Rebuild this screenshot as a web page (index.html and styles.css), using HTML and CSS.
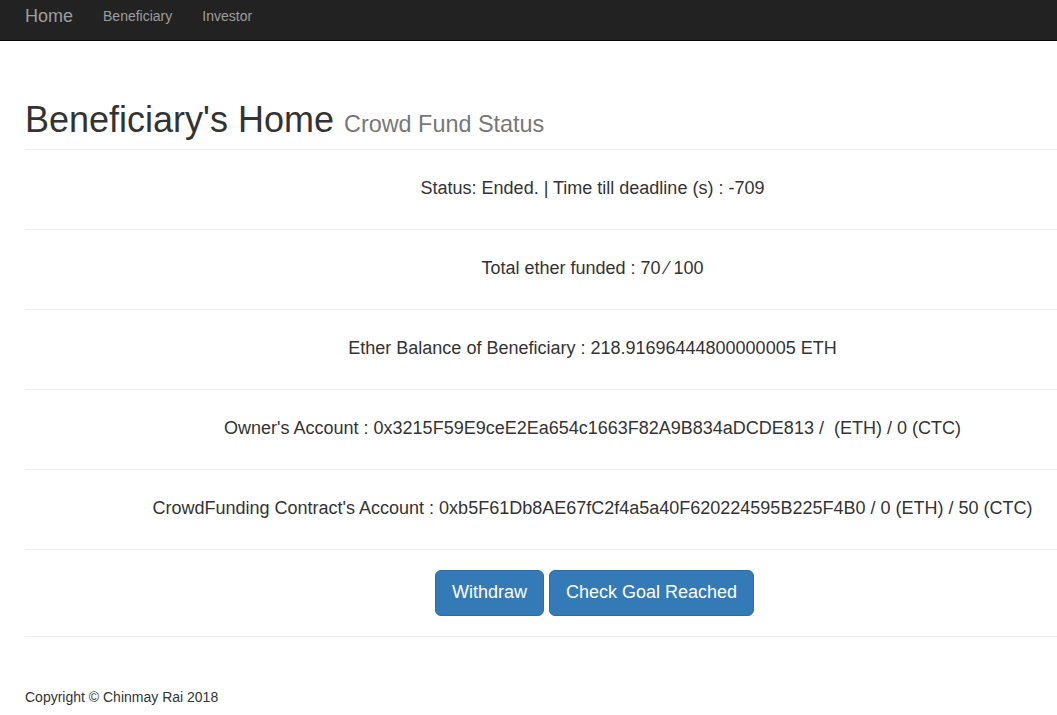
FILE: index.html
```html
<!DOCTYPE html>
<html>
<head>
<meta charset="utf-8">
<title>Beneficiary's Home</title>
<link rel="stylesheet" href="styles.css">
</head>
<body>
<nav class="navbar">
  <a class="brand" href="#">Home</a>
  <a class="nav-link" href="#">Beneficiary</a>
  <a class="nav-link" href="#">Investor</a>
</nav>
<main class="page">
  <div class="page-header">
    <h1>Beneficiary's Home <small>Crowd Fund Status</small></h1>
  </div>
  <div class="rows">
    <div class="row">Status: Ended. | Time till deadline (s) : -709</div>
    <div class="row">Total ether funded : 70 ⁄ 100</div>
    <div class="row">Ether Balance of Beneficiary : 218.91696444800000005 ETH</div>
    <div class="row">Owner's Account : 0x3215F59E9ceE2Ea654c1663F82A9B834aDCDE813 / &nbsp;(ETH) / 0 (CTC)</div>
    <div class="row">CrowdFunding Contract's Account : 0xb5F61Db8AE67fC2f4a5a40F620224595B225F4B0 / 0 (ETH) / 50 (CTC)</div>
    <div class="row actions">
      <button class="btn">Withdraw</button>
      <button class="btn">Check Goal Reached</button>
    </div>
  </div>
  <footer class="footer">Copyright © Chinmay Rai 2018</footer>
</main>
</body>
</html>
```
FILE: styles.css
```css
body {
  margin: 0;
  font-family: "Liberation Sans", Arial, sans-serif;
  font-size: 14px;
  line-height: 1.42857;
  color: #333;
  background: #fff;
}
.navbar {
  height: 40px;
  background: #222;
  border-bottom: 1px solid #080808;
  display: flex;
  align-items: center;
  padding-left: 10px;
}
.navbar a { text-decoration: none; color: #9d9d9d; }
.brand {
  font-size: 18px;
  line-height: 20px;
  padding: 0 15px;
  margin-top: -8px;
}
.nav-link {
  font-size: 14px;
  line-height: 20px;
  padding: 0 15px;
  margin-top: -8px;
}
.page {
  padding-left: 25px;
}
.page-header {
  margin: 59px 0 0;
  padding-bottom: 9px;
  border-bottom: 1px solid #eee;
}
h1 {
  margin: 0;
  font-size: 36px;
  font-weight: 500;
  line-height: 1.1;
}
h1 small {
  font-size: 65%;
  color: #777;
  font-weight: normal;
}
.row {
  height: 79px;
  border-bottom: 1px solid #eee;
  display: flex;
  align-items: center;
  justify-content: center;
  padding-left: 103px;
  font-size: 18px;
  white-space: nowrap;
}
.row.actions {
  height: auto;
  padding-top: 20px;
  padding-bottom: 20px;
  padding-left: 107px;
  gap: 5px;
}
.btn {
  font-family: "Liberation Sans", Arial, sans-serif;
  font-size: 18px;
  line-height: 1.3333;
  padding: 10px 16px;
  color: #fff;
  background: #337ab7;
  border: 1px solid #2e6da4;
  border-radius: 6px;
  cursor: pointer;
}
.footer {
  padding-top: 50px;
  line-height: 20px;
}
```
